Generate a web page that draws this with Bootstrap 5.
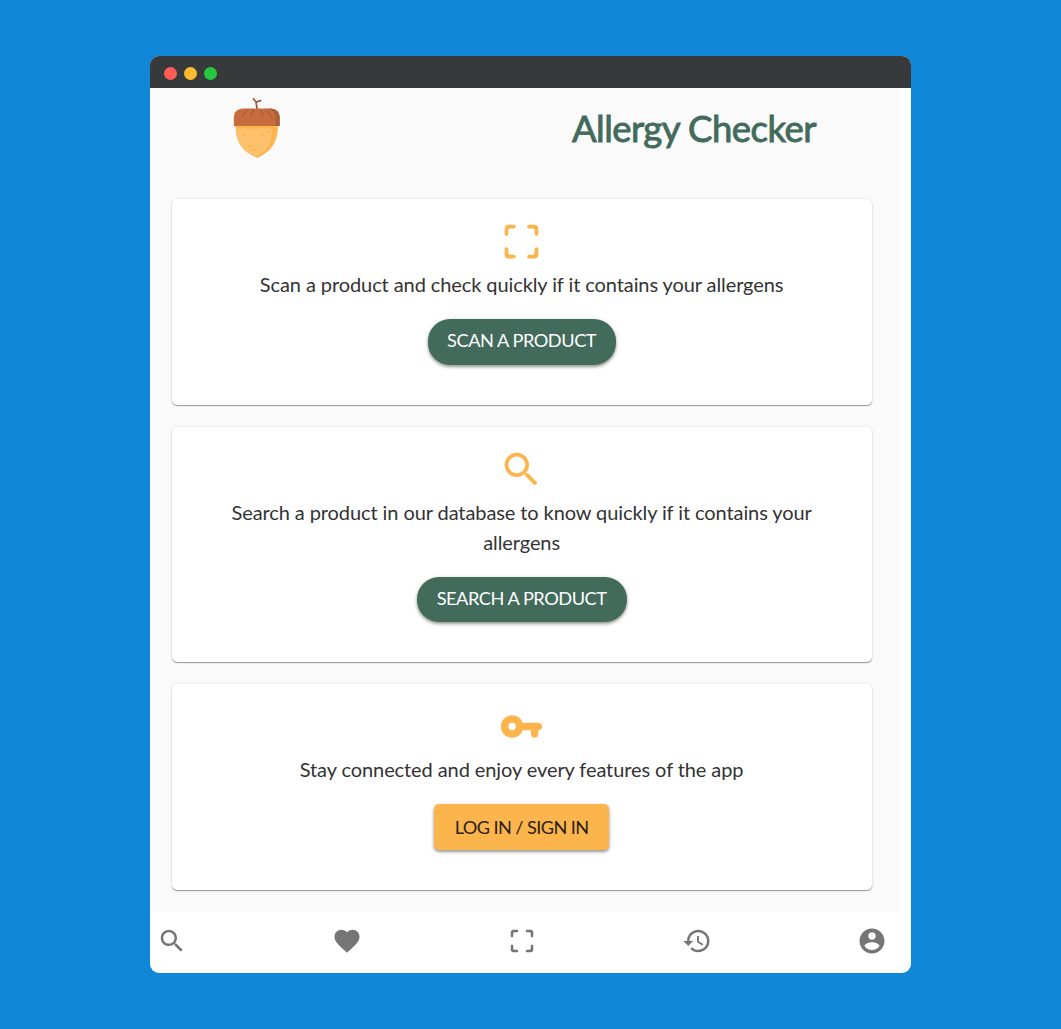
<!DOCTYPE html>
<html lang="en">
<head>
<meta charset="utf-8">
<meta name="viewport" content="width=device-width, initial-scale=1">
<title>Allergy Checker</title>
<link href="https://cdn.jsdelivr.net/npm/bootstrap@5.3.0/dist/css/bootstrap.min.css" rel="stylesheet">
<style>
body{background:#0f86d6;font-family:Lato,"Liberation Sans",sans-serif;color:#333;height:1029px;padding-top:56px}
.app-window{width:761px;height:917px;margin-left:150px;border-radius:9px}
.title-bar{height:32px;background:#38393b;padding:2px 0 0 13.5px;gap:7px}
.dot{width:13px;height:13px;border-radius:50%}
.dot-r{background:#ff5d55}.dot-y{background:#ffbb2e}.dot-g{background:#27c840}
.app-page{width:750.4px;height:824px;background:#fafafa;padding:0 28.7px 0 21.5px}
.brand-row{height:110.5px}
.acorn{width:48px;height:62px;margin:9px 0 0 61px}
.brand-name{font-size:36.5px;font-weight:400;line-height:45px;letter-spacing:-.52px;color:#426b5b;-webkit-text-stroke:.9px #426b5b;margin:17.5px 55.8px 0 0;white-space:nowrap}
.tile{border:0;border-radius:5px;background:#fff;height:206.3px;margin-bottom:22px;padding:20px 40px 0;box-shadow:0 1px 1px rgba(0,0,0,.38),0 0 3px rgba(0,0,0,.1)}
.tile-tall{height:235px}
.tile svg{width:45px;height:45px;fill:#fcb54d}
.tile p{font-size:20px;line-height:30px;letter-spacing:-.09px;margin:5px 0 20px}
.act{height:46px;font-size:18.2px;line-height:30px;padding:6px 19.5px 9px;border:0;letter-spacing:-.46px;white-space:nowrap;box-shadow:0 2px 3px rgba(0,0,0,.33),0 1px 5px rgba(0,0,0,.15)}
.act-green,.act-green:hover{background:#426b5b;color:#fff;border-radius:22px}
.tile-tall .act{height:45.5px;padding-left:20px;padding-right:20px}
.act-gold,.act-gold:hover{background:#fcb54d;color:#2b2113;border-radius:5px;padding:7.5px 20.5px;letter-spacing:-.6px}
.tab-bar{height:61px;padding:0 24.5px 3px 6.5px}
.tab-bar svg{width:30px;height:30px;fill:#757575;display:block}
</style>
<script src="https://cdn.jsdelivr.net/npm/bootstrap@5.3.0/dist/js/bootstrap.bundle.min.js"></script>
</head>
<body>
<svg class="d-none">
<symbol id="i-scan" viewBox="0 0 24 24"><path d="M3 5v3c0 .55.45 1 1 1s1-.45 1-1V6c0-.55.45-1 1-1h2c.55 0 1-.45 1-1s-.45-1-1-1H5c-1.1 0-2 .9-2 2zm2 11c0-.55-.45-1-1-1s-1 .45-1 1v3c0 1.1.9 2 2 2h3c.55 0 1-.45 1-1s-.45-1-1-1H6c-.55 0-1-.45-1-1v-2zm13 3h-2c-.55 0-1 .45-1 1s.45 1 1 1h3c1.1 0 2-.9 2-2v-3c0-.55-.45-1-1-1s-1 .45-1 1v2c0 .55-.45 1-1 1zm1-16h-3c-.55 0-1 .45-1 1s.45 1 1 1h2c.55 0 1 .45 1 1v2c0 .55.45 1 1 1s1-.45 1-1V5c0-1.1-.9-2-2-2z"/></symbol>
<symbol id="i-search" viewBox="0 0 24 24"><path d="M15.5 14h-.79l-.28-.27C15.41 12.59 16 11.11 16 9.5 16 5.91 13.09 3 9.5 3S3 5.91 3 9.5 5.91 16 9.5 16c1.61 0 3.09-.59 4.23-1.57l.27.28v.79l5 4.99L20.49 19l-4.99-5zm-6 0C7.01 14 5 11.99 5 9.5S7.01 5 9.5 5 14 7.01 14 9.5 11.99 14 9.5 14z"/></symbol>
</svg>
<div class="app-window bg-white overflow-hidden d-flex flex-column">
  <div class="title-bar d-flex align-items-center"><span class="dot dot-r"></span><span class="dot dot-y"></span><span class="dot dot-g"></span></div>
  <main class="app-page">
    <header class="brand-row d-flex justify-content-between align-items-start">
      <svg class="acorn" viewBox="0 0 48 62">
        <path d="M24.5 14 23 5 20 1.4M23.4 5 28.3 3.4" fill="none" stroke="#9c573a" stroke-width="1.7"/>
        <path d="M2.5 27H45C45 45 39 54 24 61 9 54 2.5 45 2.5 27z" fill="#fdb44c"/>
        <path d="M3 31.500H39C39.500 46 34 55 22 60 9 54 3 45 3 31.500z" fill="#fdc06c"/>
        <path d="M.8 29V21C.8 15 4.500 11.500 10 11.500H37C43 11.500 46.700 15 46.700 21V29z" fill="#c76c3e"/>
        <path d="M35 11.500H37C43 11.500 46.700 15 46.700 21V29H42.500V21C42.500 16 39 12.500 35 11.500z" fill="#ac6039"/>
        <path d="M15.500 12.500Q10 15.500 9.500 20.500M21 12.500Q18 15.500 18 20.500M26 12.500Q29.500 15.500 30 20.500M32 12.500Q37.500 15.500 38 20.500" fill="none" stroke="#a95f39" stroke-width="1.300"/>
        <g fill="#fdb44c"><circle cx="11" cy="38" r="1.400"/><circle cx="17.500" cy="49" r="1.400"/><circle cx="21.500" cy="53" r="1.300"/><circle cx="30" cy="38" r="1.300"/><circle cx="36" cy="34.500" r="1.400"/></g>
      </svg>
      <h1 class="brand-name">Allergy Checker</h1>
    </header>
    <section class="card tile text-center align-items-center">
      <svg><use href="#i-scan"/></svg>
      <p>Scan a product and check quickly if it contains your allergens</p>
      <button class="btn act act-green">SCAN A PRODUCT</button>
    </section>
    <section class="card tile tile-tall text-center align-items-center">
      <svg><use href="#i-search"/></svg>
      <p>Search a product in our database to know quickly if it contains your allergens</p>
      <button class="btn act act-green">SEARCH A PRODUCT</button>
    </section>
    <section class="card tile text-center align-items-center">
      <svg viewBox="0 0 24 24"><path d="M12.650 10C11.700 7.310 8.900 5.500 5.770 6.120c-2.290.46-4.150 2.290-4.630 4.580C.32 14.570 3.260 18 7 18c2.610 0 4.830-1.670 5.650-4H17v2c0 1.100.9 2 2 2s2-.9 2-2v-2c1.100 0 2-.9 2-2s-.9-2-2-2h-8.350zM7 14c-1.100 0-2-.9-2-2s.9-2 2-2 2 .9 2 2-.9 2-2 2z"/></svg>
      <p>Stay connected and enjoy every features of the app</p>
      <button class="btn act act-gold">LOG IN / SIGN IN</button>
    </section>
  </main>
  <nav class="tab-bar d-flex justify-content-between align-items-center">
    <svg><use href="#i-search"/></svg>
    <svg viewBox="0 0 24 24"><path d="M12 21.350l-1.450-1.320C5.400 15.360 2 12.280 2 8.500 2 5.420 4.420 3 7.500 3c1.740 0 3.410.81 4.500 2.090C13.090 3.810 14.760 3 16.500 3 19.580 3 22 5.420 22 8.500c0 3.780-3.400 6.860-8.550 11.540L12 21.350z"/></svg>
    <svg><use href="#i-scan"/></svg>
    <svg viewBox="0 0 24 24"><path d="M13 3c-4.970 0-9 4.030-9 9H1l3.890 3.890.07.14L9 12H6c0-3.870 3.130-7 7-7s7 3.130 7 7-3.130 7-7 7c-1.930 0-3.680-.79-4.940-2.060l-1.420 1.420C8.270 19.990 10.510 21 13 21c4.970 0 9-4.030 9-9s-4.030-9-9-9zm-1 5v5l4.280 2.540.72-1.210-3.500-2.080V8H12z"/></svg>
    <svg viewBox="0 0 24 24"><path d="M12 2C6.480 2 2 6.480 2 12s4.480 10 10 10 10-4.480 10-10S17.520 2 12 2zm0 3c1.660 0 3 1.340 3 3s-1.340 3-3 3-3-1.340-3-3 1.340-3 3-3zm0 14.200c-2.500 0-4.710-1.280-6-3.220.03-1.990 4-3.080 6-3.080 1.990 0 5.970 1.090 6 3.080-1.290 1.940-3.500 3.220-6 3.220z"/></svg>
  </nav>
</div>
</body>
</html>
